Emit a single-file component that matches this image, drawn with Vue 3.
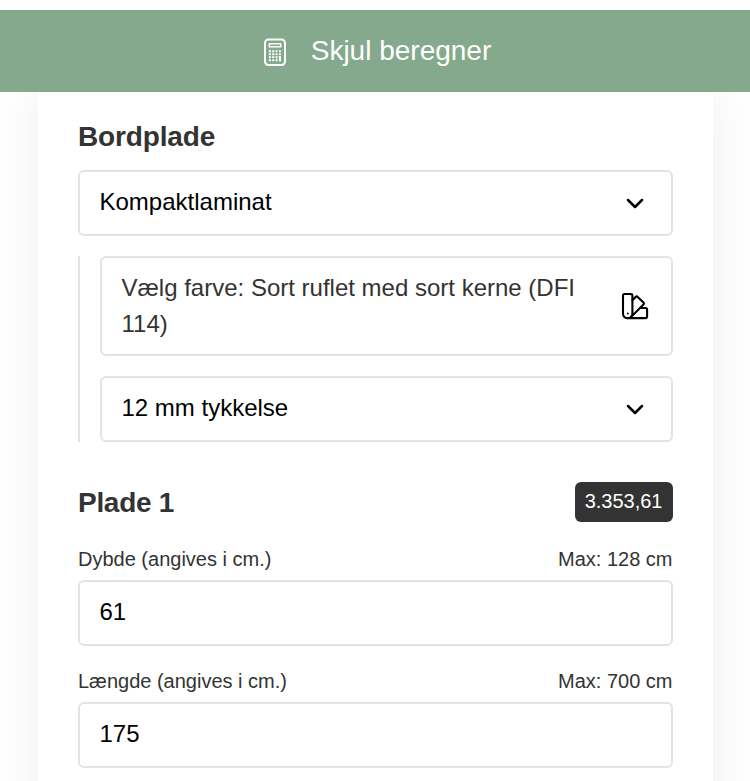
<script setup>
const fields = [
  { label: 'Dybde (angives i cm.)', max: 'Max: 128 cm', value: '61' },
  { label: 'Længde (angives i cm.)', max: 'Max: 700 cm', value: '175' },
]
const dots = []
for (const y of [13.2, 16.2, 19.2, 22.2]) for (const x of [6.9, 10.2, 13.5, 16.9]) dots.push({ x, y })
</script>

<template>
  <div class="page">
    <button class="toggle">
      <svg class="calc" viewBox="0 0 24 29" fill="none">
        <rect x="2" y="1.5" width="20" height="25.5" rx="3.4" stroke="#fff" stroke-width="2" />
        <rect x="6.3" y="5.8" width="11.4" height="3" stroke="#fff" stroke-width="1.4" />
        <rect v-for="(d, i) in dots" :key="i" :x="d.x - 1" :y="d.y - 1" width="2" height="2" fill="#fff" />
        <rect x="15.9" y="18.2" width="2" height="5" fill="#fff" />
      </svg>
      <span>Skjul beregner</span>
    </button>

    <main class="card">
      <h2>Bordplade</h2>
      <div class="box select">
        <span>Kompaktlaminat</span>
        <svg class="chevron" viewBox="0 0 18 12"><path d="M2 2l7 7 7-7" /></svg>
      </div>

      <div class="nested">
        <div class="box color">
          <span>Vælg farve: Sort ruflet med sort kerne (DFI 114)</span>
          <svg class="swatch" viewBox="0 0 28 28">
            <path d="M3.4 2H10a1.4 1.4 0 0 1 1.4 1.4V21.2a5.4 5 0 0 1-5.2 5A4.6 4.6 0 0 1 2 21.6V3.4A1.4 1.4 0 0 1 3.4 2z" />
            <path d="M11.4 8.2l3.2-3.3a1.5 1.5 0 0 1 2.1 0l5.8 5.6a1.4 1.4 0 0 1 0 2L10 25" />
            <path d="M19.2 16H24.6a1.5 1.5 0 0 1 1.5 1.5V24.6a1.5 1.5 0 0 1-1.5 1.5H6.4" />
            <circle cx="6.8" cy="21.4" r="1" />
          </svg>
        </div>
        <div class="box select">
          <span>12 mm tykkelse</span>
          <svg class="chevron" viewBox="0 0 18 12"><path d="M2 2l7 7 7-7" /></svg>
        </div>
      </div>

      <div class="heading">
        <h2>Plade 1</h2>
        <span class="price">3.353,61</span>
      </div>

      <div v-for="f in fields" :key="f.label" class="field">
        <div class="labels"><span>{{ f.label }}</span><span>{{ f.max }}</span></div>
        <div class="box">{{ f.value }}</div>
      </div>
    </main>
  </div>
</template>

<style>
body {
  background: #fefefe;
}
</style>

<style scoped>
.page {
  box-sizing: border-box;
  height: 781px;
  padding-top: 10px;
  overflow: hidden;
  font-family: "Liberation Sans", Arial, sans-serif;
  color: #333;
}
.toggle {
  position: relative;
  z-index: 1;
  display: flex;
  align-items: center;
  justify-content: center;
  gap: 24px;
  width: 100%;
  height: 82px;
  padding: 0 0 0 4px;
  border: 0;
  background: #85a98d;
  color: #fff;
  font: 28px/32px "Liberation Sans", Arial, sans-serif;
}
.calc {
  width: 24px;
  height: 29px;
  margin-top: 2px;
}
.card {
  box-sizing: border-box;
  width: 675px;
  height: 760px;
  margin-left: 38px;
  padding: 28px 40px 0;
  background: #fff;
  box-shadow: 0 0 40px rgba(0, 0, 0, 0.06);
}
h2 {
  margin: 0;
  font-size: 28px;
  line-height: 34px;
  font-weight: 700;
  letter-spacing: -0.15px;
}
.box {
  box-sizing: border-box;
  display: flex;
  align-items: center;
  justify-content: space-between;
  height: 66px;
  padding: 0 20px 2px 19.5px;
  border: 2px solid #e3e3e3;
  border-radius: 6px;
  background: #fff;
  color: #000;
  font-size: 24px;
  line-height: 36px;
}
h2 + .box {
  margin-top: 16px;
}
.select {
  padding-right: 27px;
}
.chevron {
  width: 18px;
  height: 12px;
  margin-top: 3px;
}
.chevron path,
.swatch path {
  fill: none;
  stroke: #000;
  stroke-width: 2.5;
  stroke-linecap: round;
  stroke-linejoin: round;
}
.nested {
  display: flex;
  flex-direction: column;
  gap: 20px;
  margin-top: 20px;
  padding-left: 20px;
  border-left: 2px solid #e3e3e3;
}
.color {
  height: 100px;
  padding-right: 22px;
  padding-bottom: 0;
  color: #333;
}
.color span {
  width: 470px;
}
.swatch {
  width: 28px;
  height: 28px;
}
.swatch path {
  stroke-width: 2.1;
}
.heading {
  display: flex;
  align-items: center;
  justify-content: space-between;
  height: 40px;
  margin-top: 40px;
}
.heading h2 {
  padding-top: 2px;
  letter-spacing: -0.3px;
}
.price {
  box-sizing: border-box;
  height: 40px;
  padding: 0 10.5px 0 9.5px;
  border-radius: 6px;
  background: #333;
  color: #fff;
  font-size: 20px;
  line-height: 38px;
}
.field {
  margin-top: 20px;
}
.labels {
  display: flex;
  justify-content: space-between;
  height: 38px;
  padding-right: 0.5px;
  font-size: 20px;
  line-height: 34px;
}
.field + .field .labels {
  height: 36px;
  line-height: 30px;
}
</style>
